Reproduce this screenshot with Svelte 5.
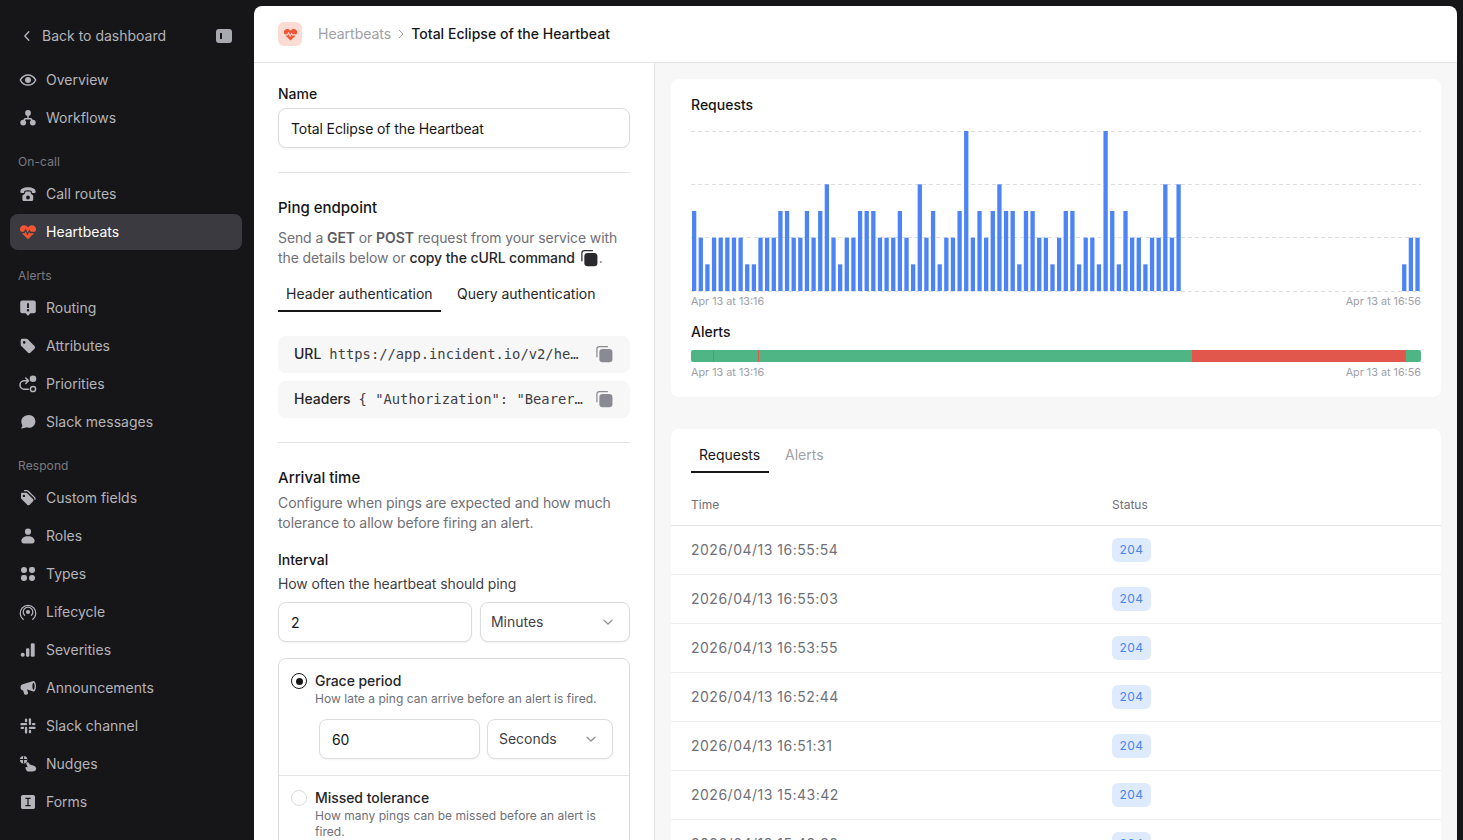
<script>
  const levels = [3,2,1,2,2,2,2,2,1,1,2,2,2,3,3,2,2,3,2,3,4,2,1,2,2,3,3,3,2,2,2,3,2,1,4,2,3,1,2,2,3,6,2,3,2,3,4,3,3,1,3,3,2,2,1,2,3,3,1,2,2,1,6,3,1,3,2,2,1,2,2,4,2,4];
  const bars = [...levels.map((l, i) => ({ i, l })), { i: 107, l: 1 }, { i: 108, l: 2 }, { i: 109, l: 2 }];
  const slot = 730 / 110;
  const unit = 160 / 6;

  const rows = [
    '2026/04/13 16:55:54',
    '2026/04/13 16:55:03',
    '2026/04/13 16:53:55',
    '2026/04/13 16:52:44',
    '2026/04/13 16:51:31',
    '2026/04/13 15:43:42',
    '2026/04/13 15:42:38'
  ];

  const nav = [
    { items: [['Overview', 'eye'], ['Workflows', 'flow']] },
    { title: 'On-call', items: [['Call routes', 'phone'], ['Heartbeats', 'heart']] },
    { title: 'Alerts', items: [['Routing', 'alert'], ['Attributes', 'tag'], ['Priorities', 'prio'], ['Slack messages', 'bubble']] },
    { title: 'Respond', items: [['Custom fields', 'tags'], ['Roles', 'user'], ['Types', 'grid'], ['Lifecycle', 'signal'], ['Severities', 'sev'], ['Announcements', 'mega'], ['Slack channel', 'slack'], ['Nudges', 'nudge'], ['Forms', 'form']] }
  ];
</script>

{#snippet heart()}
  <path fill="currentColor" d="M9 16.200 2.900 10.200H5.600l1-1.900 1.900 4 1.700-3.200.7 1.100h4.200L9 16.200Zm7.200-7.400h-4.500L10.300 6.500 8.600 9.700 6.700 5.700 4.800 8.800H1.800C1.200 7.900 1 7 1 6.200 1 4 2.800 2.300 5 2.300c1.600 0 3 .8 4 2.100 1-1.300 2.400-2.100 4-2.100 2.200 0 4 1.700 4 3.900 0 .9-.3 1.800-.8 2.600Z"/>
{/snippet}

{#snippet icon(name)}
  <svg class="icon" class:active-icon={name === 'heart'} viewBox="0 0 18 18" aria-hidden="true">
    {#if name === 'eye'}
      <path fill="none" stroke="currentColor" stroke-width="1.500" d="M1.300 9C3 5.700 5.700 3.900 9 3.900s6 1.800 7.700 5.100c-1.700 3.300-4.400 5.100-7.700 5.100S3 12.300 1.300 9Z"/>
      <circle cx="9" cy="9" r="3" fill="currentColor"/>
    {:else if name === 'flow'}
      <circle cx="9" cy="4" r="2.900" fill="currentColor"/>
      <circle cx="4.200" cy="13.600" r="2.900" fill="currentColor"/>
      <circle cx="13.800" cy="13.600" r="2.900" fill="currentColor"/>
      <path fill="none" stroke="currentColor" stroke-width="1.500" d="M9 6v3.800M4.600 12l1.400-2.200h6l1.400 2.200"/>
    {:else if name === 'phone'}
      <path fill="currentColor" d="M1.300 6.800C1.300 4 4.500 2.300 9 2.300s7.700 1.700 7.700 4.500c0 .8-.5 1.200-1.200 1.200h-1.700c-.7 0-1.100-.4-1.100-1.100v-1C11.600 5.500 10.300 5.300 9 5.300s-2.600.2-3.700.6v1C5.300 7.600 4.900 8 4.200 8H2.500c-.7 0-1.200-.4-1.200-1.200Z"/>
      <path fill="currentColor" fill-rule="evenodd" d="M6.600 6.600h4.800l.6 2.200 2.200 1.800v3.900c0 .9-.7 1.500-1.500 1.500H4.900c-.9 0-1.500-.6-1.500-1.500v-3.900l2.400-1.800.8-2.200Zm2.400 4a1.900 1.900 0 1 0 0 3.800 1.900 1.900 0 0 0 0-3.800Z"/>
    {:else if name === 'heart'}
      {@render heart()}
    {:else if name === 'alert'}
      <path fill="currentColor" fill-rule="evenodd" d="M3.200 1.600h11.600c1.100 0 2 .9 2 2v8.600c0 1.100-.9 2-2 2h-3.400L9.300 16.500c-.2.200-.5.200-.7 0l-2-2.300H3.200c-1.100 0-2-.9-2-2V3.600c0-1.100.9-2 2-2ZM8.100 4.300v4.800h1.800V4.300H8.100Zm.9 5.800a1.200 1.200 0 1 0 0 2.400 1.200 1.200 0 0 0 0-2.400Z"/>
    {:else if name === 'tag'}
      <path fill="currentColor" fill-rule="evenodd" d="M3.200 1.800h4.400c.5 0 1 .2 1.400.6l6.500 6.500c.8.800.8 2 0 2.800l-3.900 3.900c-.8.800-2 .8-2.800 0L2.300 9.100c-.4-.4-.6-.9-.6-1.400V3.300c0-.8.700-1.500 1.500-1.500Zm2 2.300a1.300 1.300 0 1 0 0 2.600 1.300 1.300 0 0 0 0-2.600Z"/>
    {:else if name === 'prio'}
      <circle cx="14" cy="3.700" r="3.300" fill="currentColor"/>
      <circle cx="14" cy="14" r="2.600" fill="none" stroke="currentColor" stroke-width="1.500"/>
      <path fill="none" stroke="currentColor" stroke-width="1.500" stroke-linecap="round" stroke-linejoin="round" d="M9.300 14.200H5.200a4.200 4.200 0 0 1 0-8.400H9.300M6.800 3 9.500 5.800 6.800 8.500"/>
    {:else if name === 'bubble'}
      <path fill="currentColor" d="M9.800 2c3.700 0 6.600 2.800 6.600 6.400s-2.900 6.400-6.600 6.400c-1 0-1.800-.2-2.600-.5-1.200.9-3.400 1.200-5.400 1.100 1-.8 1.500-1.800 1.500-3.200-.7-1.100-1-2.400-1-3.800C2.300 4.800 6.100 2 9.800 2Z"/>
    {:else if name === 'tags'}
      <path fill="currentColor" fill-rule="evenodd" d="M3 3.700h4c.5 0 .9.200 1.200.5l5.700 5.700c.7.700.7 1.800 0 2.500l-3.200 3.300c-.7.700-1.800.7-2.500 0L2.500 10c-.3-.3-.5-.8-.5-1.200v-4c0-.6.400-1.100 1-1.100Zm1.900 2a1.200 1.200 0 1 0 0 2.400 1.200 1.200 0 0 0 0-2.400Z"/>
      <path fill="none" stroke="currentColor" stroke-width="1.300" stroke-linecap="round" d="M5.500 1.600h2.200c.6 0 1 .2 1.400.6l6.300 6.200c.5.500.7 1.200.5 1.800"/>
    {:else if name === 'user'}
      <circle cx="9" cy="4.700" r="3.100" fill="currentColor"/>
      <path fill="currentColor" d="M9 9.200c4 0 6.600 2 6.600 4.900 0 1.400-1 2.300-2.400 2.300H4.800c-1.400 0-2.400-.9-2.400-2.300 0-2.900 2.600-4.900 6.600-4.900Z"/>
    {:else if name === 'grid'}
      <circle cx="5" cy="4.900" r="3" fill="currentColor"/>
      <rect x="10" y="1.900" width="6" height="6" rx="2.400" fill="currentColor"/>
      <rect x="2" y="10" width="6" height="6" rx="2.400" fill="currentColor"/>
      <circle cx="13" cy="13" r="3" fill="currentColor"/>
    {:else if name === 'signal'}
      <g fill="none" stroke="currentColor" stroke-width="1.300" stroke-linecap="round">
        <path d="M4.200 16.300A7.800 7.800 0 1 1 13.800 16.300"/>
        <path d="M5.600 12.400a4.800 4.800 0 1 1 6.800 0"/>
      </g>
      <circle cx="9" cy="9" r="2.100" fill="currentColor"/>
    {:else if name === 'sev'}
      <rect x="1.700" y="11.700" width="4" height="4" rx="1.800" fill="currentColor"/>
      <rect x="7" y="7.300" width="3.400" height="8.400" rx="1.200" fill="currentColor"/>
      <rect x="11.800" y="2.300" width="3.900" height="13.400" rx="1.200" fill="currentColor"/>
    {:else if name === 'mega'}
      <path fill="currentColor" fill-rule="evenodd" d="M14.500 1.900c1.400 0 2.500 2.300 2.500 5.300s-1.100 5.300-2.500 5.300c-.3 0-.6-.1-.9-.3L8.200 10.600l-.1.100.9 3c.2.800-.2 1.600-1 1.800l-1 .3c-.8.200-1.600-.2-1.900-1l-.9-3.300C2.600 11.300 1.500 10.100 1.500 8.400c0-1.800 1.200-3 3-3.300l9.100-2.900c.3-.2.600-.3.900-.3Zm0 1.800c-.5 0-1.100 1.500-1.100 3.500s.6 3.500 1.100 3.500 1.100-1.500 1.100-3.500-.6-3.500-1.100-3.500Z"/>
    {:else if name === 'slack'}
      <g fill="currentColor">
        <rect x="1.300" y="6" width="6.900" height="2.300" rx="1.150"/>
        <rect x="5.900" y="1.600" width="2.300" height="3.700" rx="1.150"/>
        <rect x="9.800" y="1.300" width="2.300" height="6.900" rx="1.150"/>
        <rect x="12.800" y="5.900" width="3.700" height="2.300" rx="1.150"/>
        <rect x="9.800" y="9.800" width="6.900" height="2.300" rx="1.150"/>
        <rect x="9.800" y="12.800" width="2.300" height="3.700" rx="1.150"/>
        <rect x="5.900" y="9.800" width="2.300" height="6.900" rx="1.150"/>
        <rect x="1.500" y="9.800" width="3.700" height="2.300" rx="1.150"/>
      </g>
    {:else if name === 'nudge'}
      <path fill="currentColor" d="M7.900 7.400c.7-.5 1.600-.2 2 .5l.9 1.700 3.300.8c1.900.5 3.100 1.700 3.100 3.200 0 1.800-1.500 3-3.800 3H9.900c-1.300 0-2.300-.7-2.800-1.900l-.7-1.700c-.2-.6.300-1.200 1-1.100l1.400.3-1.500-3.100c-.3-.6-.1-1.300.6-1.700Z"/>
      <circle cx="4.600" cy="4.800" r="3.700" fill="currentColor"/>
      <path fill="none" stroke="#161618" stroke-width="1" d="M1 4.500h7M4.600 1.200v7.200"/>
    {:else if name === 'form'}
      <path fill="currentColor" fill-rule="evenodd" d="M3.800 2h10.400c1.100 0 1.800.8 1.800 1.800v10.400c0 1.100-.8 1.800-1.800 1.800H3.800C2.800 16 2 15.200 2 14.200V3.800C2 2.800 2.800 2 3.800 2Zm2.600 2.800v1.300h2v5.800h-2v1.300h5.200v-1.300h-2V6.100h2V4.800H6.400Z"/>
    {/if}
  </svg>
{/snippet}

{#snippet copy(cls)}
  <svg class={cls} viewBox="0 0 18 18" aria-hidden="true">
    <path fill="none" stroke="currentColor" stroke-width="1.100" d="M2.600 12V4.600c0-1.300 1-2.300 2.300-2.300h7.600"/>
    <rect x="4.800" y="4.600" width="11.800" height="11.800" rx="3" fill="currentColor"/>
  </svg>
{/snippet}

{#snippet chevron()}
  <svg class="chev" viewBox="0 0 12 12" aria-hidden="true"><path fill="none" stroke="currentColor" stroke-width="1.200" stroke-linecap="round" stroke-linejoin="round" d="M2 4.200 6 8l4-3.800"/></svg>
{/snippet}

<div class="shell">
  <aside class="sidebar">
    <div class="back">
      <svg class="back-chev" viewBox="0 0 12 12" aria-hidden="true"><path fill="none" stroke="currentColor" stroke-width="1.400" stroke-linecap="round" stroke-linejoin="round" d="M7.800 1.800 3.800 6l4 4.200"/></svg>
      <span>Back to dashboard</span>
      <span class="toggle"></span>
    </div>
    {#each nav as group}
      {#if group.title}<div class="section">{group.title}</div>{/if}
      <ul class="items">
        {#each group.items as [label, ic]}
          <li class="item" class:active={label === 'Heartbeats'}>
            {@render icon(ic)}<span>{label}</span>
          </li>
        {/each}
      </ul>
    {/each}
  </aside>

  <main class="main">
    <header class="topbar">
      <span class="logo"><svg viewBox="0 0 18 18" aria-hidden="true">{@render heart()}</svg></span>
      <span class="crumb">Heartbeats</span>
      <svg class="crumb-sep" viewBox="0 0 8 10" aria-hidden="true"><path fill="none" stroke="currentColor" stroke-width="1" d="M2 1l4 4-4 4"/></svg>
      <span class="crumb-current">Total Eclipse of the Heartbeat</span>
    </header>

    <div class="columns">
      <section class="form">
        <div class="label name-label">Name</div>
        <div class="input">Total Eclipse of the Heartbeat</div>
        <hr class="rule first-rule" />

        <h2 class="heading">Ping endpoint</h2>
        <p class="help ping-help">Send a <b>GET</b> or <b>POST</b> request from your service with the details below or <b class="dark">copy the cURL command</b> {@render copy('copy-inline')}.</p>

        <div class="auth-tabs">
          <span class="auth-tab selected">Header authentication</span>
          <span class="auth-tab">Query authentication</span>
        </div>

        <div class="code-row"><b>URL</b><code>https://app.incident.io/v2/he…</code>{@render copy('copy-btn')}</div>
        <div class="code-row"><b>Headers</b><code>{'{'} "Authorization": "Bearer…</code>{@render copy('copy-btn')}</div>
        <hr class="rule second-rule" />

        <h2 class="heading">Arrival time</h2>
        <p class="help arrival-help">Configure when pings are expected and how much tolerance to allow before firing an alert.</p>

        <div class="label interval-label">Interval</div>
        <div class="sub">How often the heartbeat should ping</div>
        <div class="pair">
          <div class="input grow">2</div>
          <div class="select wide-select"><span>Minutes</span>{@render chevron()}</div>
        </div>

        <div class="options">
          <div class="option grace">
            <span class="radio on"></span>
            <div class="option-body">
              <div class="option-title">Grace period</div>
              <div class="option-help">How late a ping can arrive before an alert is fired.</div>
            </div>
            <div class="pair inner">
              <div class="input grow">60</div>
              <div class="select narrow-select"><span>Seconds</span>{@render chevron()}</div>
            </div>
          </div>
          <div class="option missed">
            <span class="radio"></span>
            <div class="option-body">
              <div class="option-title">Missed tolerance</div>
              <div class="option-help">How many pings can be missed before an alert is fired.</div>
            </div>
          </div>
        </div>
      </section>

      <section class="detail">
        <div class="card chart-card">
          <div class="card-title">Requests</div>
          <svg class="chart" viewBox="0 0 730 162" aria-label="Requests chart">
            {#each [0.5, 53.5, 106.5, 160.5] as y}
              <line x1="0" x2="730" y1={y} y2={y} class="gridline" />
            {/each}
            {#each bars as b}
              <rect class="bar" x={b.i * slot + 1} y={160 - b.l * unit} width="4.300" height={b.l * unit} />
            {/each}
          </svg>
          <div class="axis chart-axis"><span>Apr 13 at 13:16</span><span>Apr 13 at 16:56</span></div>
          <div class="card-title alerts-title">Alerts</div>
          <div class="status-bar">
            <i class="tick t1"></i><i class="tick t2"></i><i class="down"></i>
          </div>
          <div class="axis"><span>Apr 13 at 13:16</span><span>Apr 13 at 16:56</span></div>
        </div>

        <div class="card table-card">
          <div class="table-tabs">
            <span class="table-tab selected">Requests</span>
            <span class="table-tab">Alerts</span>
          </div>
          <div class="row head"><span>Time</span><span>Status</span></div>
          {#each rows as t}
            <div class="row"><span class="time">{t}</span><span class="badge">204</span></div>
          {/each}
        </div>
      </section>
    </div>
  </main>
</div>

<style>
  :global(body) {
    margin: 0;
    background: #161618;
    overflow: hidden;
  }
  .shell {
    display: flex;
    height: 840px;
    overflow: hidden;
    font-family: Inter, "Liberation Sans", sans-serif;
    font-size: 14px;
    line-height: 20px;
    color: #161618;
  }
  .sidebar {
    flex: 0 0 254px;
    box-sizing: border-box;
    padding: 18px 12px 0 10px;
    background: #161618;
    color: #b4b4ba;
  }
  .back {
    display: flex;
    align-items: center;
    height: 36px;
    padding-left: 11px;
    margin-bottom: 8px;
  }
  .back-chev { width: 12px; height: 12px; margin-right: 9px; }
  .toggle {
    position: relative;
    width: 16px;
    height: 14px;
    margin: 0 10px 0 auto;
    border-radius: 3px;
    background: #a9a9b0;
  }
  .toggle::before {
    content: "";
    position: absolute;
    left: 4px;
    top: 4px;
    width: 1.500px;
    height: 6px;
    background: #161618;
  }
  .section {
    height: 20px;
    margin: 16px 0 4px 8px;
    font-size: 12px;
    letter-spacing: 0.1px;
    color: #7b7b82;
  }
  .items {
    list-style: none;
    margin: 0;
    padding: 0;
    display: flex;
    flex-direction: column;
    gap: 2px;
  }
  .item {
    display: flex;
    align-items: center;
    gap: 9px;
    height: 36px;
    padding-left: 9px;
    border-radius: 8px;
  }
  .item.active {
    background: #3a3a40;
    color: #fff;
  }
  .icon { width: 18px; height: 18px; flex: none; }
  .active-icon { color: #f25533; }

  .main {
    flex: 1;
    margin: 6px 6px 0 0;
    min-width: 0;
    background: #fff;
    border-radius: 8px 8px 0 0;
    overflow: hidden;
    display: flex;
    flex-direction: column;
  }
  .topbar {
    flex: none;
    box-sizing: border-box;
    height: 57px;
    display: flex;
    align-items: center;
    padding: 0 24px;
    border-bottom: 1px solid #e4e4e6;
  }
  .logo {
    width: 24px;
    height: 24px;
    margin-right: 16px;
    border-radius: 6px;
    background: #fbdcd5;
    color: #f25533;
    display: flex;
    align-items: center;
    justify-content: center;
  }
  .logo svg { width: 15px; height: 15px; }
  .crumb { color: #a0a0a8; }
  .crumb-sep { width: 8px; height: 10px; margin: 0 6px 0 6px; color: #a0a0a8; }
  .crumb-current { font-weight: 500; letter-spacing: 0.03px; }

  .columns { flex: 1; display: flex; min-height: 0; }
  .form {
    flex: 0 0 401px;
    box-sizing: border-box;
    padding: 21px 24px 0;
    border-right: 1px solid #e4e4e6;
  }
  .label { font-weight: 500; }
  .name-label { margin-bottom: 4px; }
  .input, .select {
    box-sizing: border-box;
    height: 40px;
    display: flex;
    align-items: center;
    border: 1px solid #dcdce0;
    border-radius: 8px;
    background: #fff;
    box-shadow: 0 1px 2px rgba(0, 0, 0, 0.05);
  }
  .input { padding: 1px 12px 0; letter-spacing: -0.1px; }
  .select { color: #3f3f46; justify-content: space-between; padding: 0 15px 0 10px; letter-spacing: -0.03px; }
  .chev { width: 12px; height: 12px; color: #8e8e96; }
  .rule { border: 0; border-top: 1px solid #e4e4e6; margin: 0; }
  .first-rule { margin-top: 24px; }
  .second-rule { margin-top: 24px; }
  .heading { margin: 25px 0 0; font-size: 15px; font-weight: 500; line-height: 20px; }
  .help { margin: 0; color: #6f6f77; letter-spacing: -0.1px; }
  .help b { font-weight: 600; color: #5a5a61; }
  .help b.dark { font-weight: 500; color: #26262a; }
  .ping-help { margin-top: 10px; }
  .copy-inline {
    width: 20px;
    height: 20px;
    vertical-align: -5px;
    color: #2a2a2e;
  }
  .auth-tabs { display: flex; gap: 8px; margin-top: 8px; height: 44px; box-sizing: border-box; }
  .auth-tab {
    padding: 8px 8px 0;
    height: 36px;
    box-sizing: border-box;
    color: #26262a;
  }
  .auth-tab.selected { flex: 0 0 163px; border-bottom: 2px solid #161618; }
  .code-row {
    box-sizing: border-box;
    height: 37px;
    display: flex;
    align-items: center;
    padding: 0 16px 2px;
    margin-top: 8px;
    background: #f7f7f7;
    border-radius: 8px;
  }
  .auth-tabs + .code-row { margin-top: 16px; }
  .code-row b { font-weight: 500; color: #26262a; margin-right: 8px; }
  .code-row code {
    flex: 1;
    font-family: "DejaVu Sans Mono", "Liberation Mono", monospace;
    font-size: 13.800px;
    color: #3f3f46;
    white-space: nowrap;
    overflow: hidden;
  }
  .copy-btn { width: 20px; height: 20px; color: #8a8a92; flex: none; margin-left: 6px; }
  .arrival-help { margin-top: 5px; }
  .interval-label { margin-top: 17px; }
  .sub { margin-top: 4px; color: #3f3f46; letter-spacing: -0.1px; }
  .pair { display: flex; gap: 8px; margin-top: 8px; }
  .grow { flex: 1; }
  .wide-select { flex: 0 0 150px; }
  .narrow-select { flex: 0 0 126px; padding-left: 11px; }
  .options {
    box-sizing: border-box;
    margin-top: 16px;
    border: 1px solid #dcdce0;
    border-radius: 8px;
  }
  .option {
    display: grid;
    grid-template-columns: 16px 1fr;
    column-gap: 8px;
    padding: 12px 16px 16px 12px;
  }
  .missed { border-top: 1px solid #e4e4e6; }
  .radio {
    box-sizing: border-box;
    width: 16px;
    height: 16px;
    margin-top: 2px;
    border: 1px solid #dcdce0;
    border-radius: 50%;
    position: relative;
  }
  .radio.on { border: 1.500px solid #161618; }
  .radio.on::after {
    content: "";
    position: absolute;
    inset: 3.500px;
    border-radius: 50%;
    background: #161618;
  }
  .option-title { font-weight: 500; color: #26262a; letter-spacing: -0.05px; }
  .option-help { font-size: 12px; line-height: 16px; color: #6f6f77; letter-spacing: 0.04px; }
  .inner { grid-column: 2; margin: 12px 0 0 4px; gap: 7px; }

  .detail {
    flex: 1;
    min-width: 0;
    box-sizing: border-box;
    padding: 16px 16px 0;
    background: #f7f7f7;
  }
  .card { background: #fff; border-radius: 8px; }
  .chart-card { height: 318px; box-sizing: border-box; padding: 16px 20px 0; }
  .card-title { font-weight: 500; }
  .chart { display: block; width: 730px; height: 162px; margin-top: 16px; }
  .gridline { stroke: #dfdfe2; stroke-width: 1; stroke-dasharray: 4 3; }
  .bar { fill: #4c84f5; }
  .axis {
    display: flex;
    justify-content: space-between;
    margin-top: 4px;
    font-size: 10.800px;
    line-height: 14px;
    color: #a0a0a8;
  }
  .chart-axis { margin-top: 2px; }
  .alerts-title { margin-top: 13px; }
  .status-bar {
    position: relative;
    height: 12px;
    margin-top: 8px;
    border-radius: 2px;
    background: #4fb584;
    overflow: hidden;
  }
  .tick, .down { position: absolute; top: 0; bottom: 0; background: #e2574c; }
  .t1 { left: 22px; width: 1px; }
  .t2 { left: 67px; width: 1px; }
  .down { left: 501px; width: 214px; }
  .table-card { margin-top: 32px; }
  .table-tabs { display: flex; padding: 8px 20px 0; height: 36px; }
  .table-tab {
    padding: 8px 8px 0;
    box-sizing: border-box;
    height: 36px;
    margin-right: 8px;
    color: #a0a0a8;
  }
  .table-tab.selected { flex: 0 0 78px; color: #161618; border-bottom: 2px solid #161618; }
  .row {
    box-sizing: border-box;
    height: 49px;
    display: grid;
    grid-template-columns: 421px 1fr;
    align-items: center;
    padding: 0 20px;
    border-bottom: 1px solid #eeeef0;
  }
  .row.head {
    height: 53px;
    padding-top: 12px;
    font-size: 12px;
    color: #6f6f77;
    border-bottom-color: #e4e4e6;
  }
  .time { color: #6f6f77; letter-spacing: 0.5px; }
  .badge {
    justify-self: start;
    box-sizing: border-box;
    width: 39px;
    height: 24px;
    line-height: 24px;
    text-align: center;
    font-size: 12px;
    letter-spacing: 0.4px;
    border-radius: 6px;
    background: #deeafd;
    color: #4c84f5;
  }
</style>
